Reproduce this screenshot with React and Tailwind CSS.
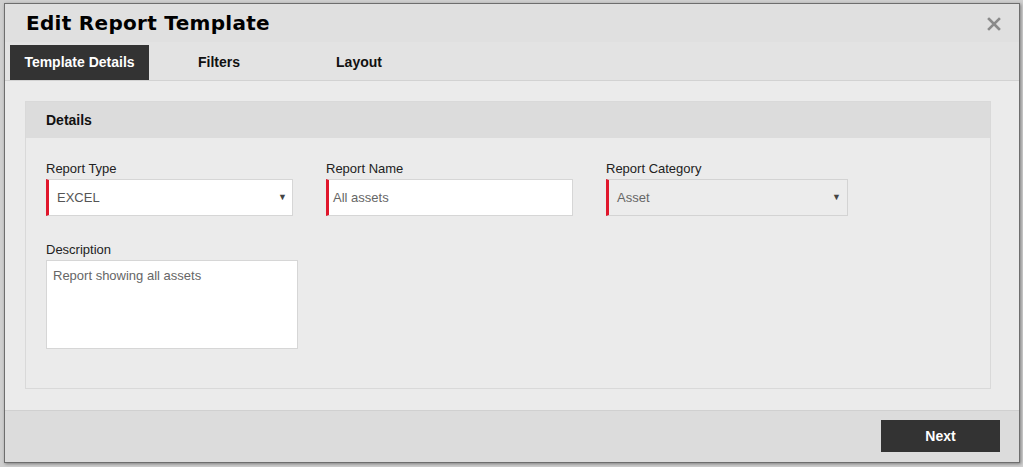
import React from 'react';

const font = { fontFamily: '"Liberation Sans", Arial, sans-serif' };
const titleFont = { fontFamily: '"DejaVu Sans", "Liberation Sans", sans-serif' };

const Field = ({ label, children, className = '' }) => (
    <div className={`flex flex-col ${className}`}>
        <label className="text-[13px] leading-4 text-[#222] mb-[2px]">{label}</label>
        {children}
    </div>
);

const Caret = () => (
    <span className="text-[9px] text-[#444] leading-none">&#9660;</span>
);

const App = () => {
    const tabs = ['Template Details', 'Filters', 'Layout'];

    return (
        <div className="w-[1023px] h-[467px] bg-[#cfcfcf] pt-[3px] pl-[4px] overflow-hidden" style={font}>
            {/* Modal */}
            <div className="w-[1016px] h-[460px] border border-[#6e6e6e] bg-[#ebebeb] flex flex-col shadow-[1px_1px_3px_rgba(0,0,0,0.4)]">
                {/* Header */}
                <div className="h-[38px] bg-[#e0e0e0] flex items-center justify-between pl-[21px] pr-[18px]">
                    <h1 className="text-[20px] font-bold text-black tracking-[0.3px]" style={titleFont}>Edit Report Template</h1>
                    <svg width="14" height="14" viewBox="0 0 14 14" className="mt-[1px]">
                        <path d="M2 2 L12 12 M12 2 L2 12" stroke="#8a8a8a" strokeWidth="2.6" strokeLinecap="square" />
                    </svg>
                </div>

                {/* Tabs */}
                <div className="h-[39px] bg-[#e3e3e3] border-b border-[#d2d2d2] flex items-end pl-[5px]">
                    {tabs.map((tab, i) => (
                        <div
                            key={tab}
                            className={`w-[139px] h-[35px] flex items-center justify-center text-[14px] font-bold ${i === 0 ? 'bg-[#333333] text-white' : 'text-[#111] w-[140px]'}`}
                        >
                            {tab}
                        </div>
                    ))}
                </div>

                {/* Body */}
                <div className="flex-1 bg-[#ebebeb] pt-[20px] pl-[20px]">
                    <div className="w-[966px] h-[288px] border border-[#d9d9d9] flex flex-col">
                        <div className="h-[36px] bg-[#dcdcdc] flex items-center pl-[20px]">
                            <span className="text-[14px] font-bold text-[#111]">Details</span>
                        </div>
                        <div className="pl-[20px] pt-[23px]">
                            <div className="flex">
                                <Field label="Report Type" className="w-[280px]">
                                    <div className="w-[247px] h-[37px] bg-white border border-[#d6d6d6] border-l-[3px] border-l-[#e0162b] flex items-center justify-between pl-[8px] pr-[5px]">
                                        <span className="text-[13px] text-[#555]">EXCEL</span>
                                        <Caret />
                                    </div>
                                </Field>
                                <Field label="Report Name" className="w-[280px]">
                                    <div className="w-[247px] h-[37px] bg-white border border-[#d6d6d6] border-l-[3px] border-l-[#e0162b] flex items-center pl-[4px]">
                                        <span className="text-[13px] text-[#666]">All assets</span>
                                    </div>
                                </Field>
                                <Field label="Report Category" className="w-[280px]">
                                    <div className="w-[242px] h-[37px] bg-[#ececec] border border-[#d3d3d3] border-l-[3px] border-l-[#e0162b] flex items-center justify-between pl-[8px] pr-[6px]">
                                        <span className="text-[13px] text-[#666]">Asset</span>
                                        <Caret />
                                    </div>
                                </Field>
                            </div>
                            <Field label="Description" className="mt-[26px]">
                                <div className="w-[252px] h-[89px] bg-white border border-[#d6d6d6] px-[6px] pt-[2px]">
                                    <span className="text-[13px] text-[#666]">Report showing all assets</span>
                                </div>
                            </Field>
                        </div>
                    </div>
                </div>

                {/* Footer */}
                <div className="h-[52px] bg-[#dcdcdc] border-t border-[#d0d0d0] flex items-start justify-end pt-[9px] pr-[19px]">
                    <button className="w-[119px] h-[32px] bg-[#333333] text-white text-[14px] font-bold">Next</button>
                </div>
            </div>
        </div>
    );
};

export default App;
